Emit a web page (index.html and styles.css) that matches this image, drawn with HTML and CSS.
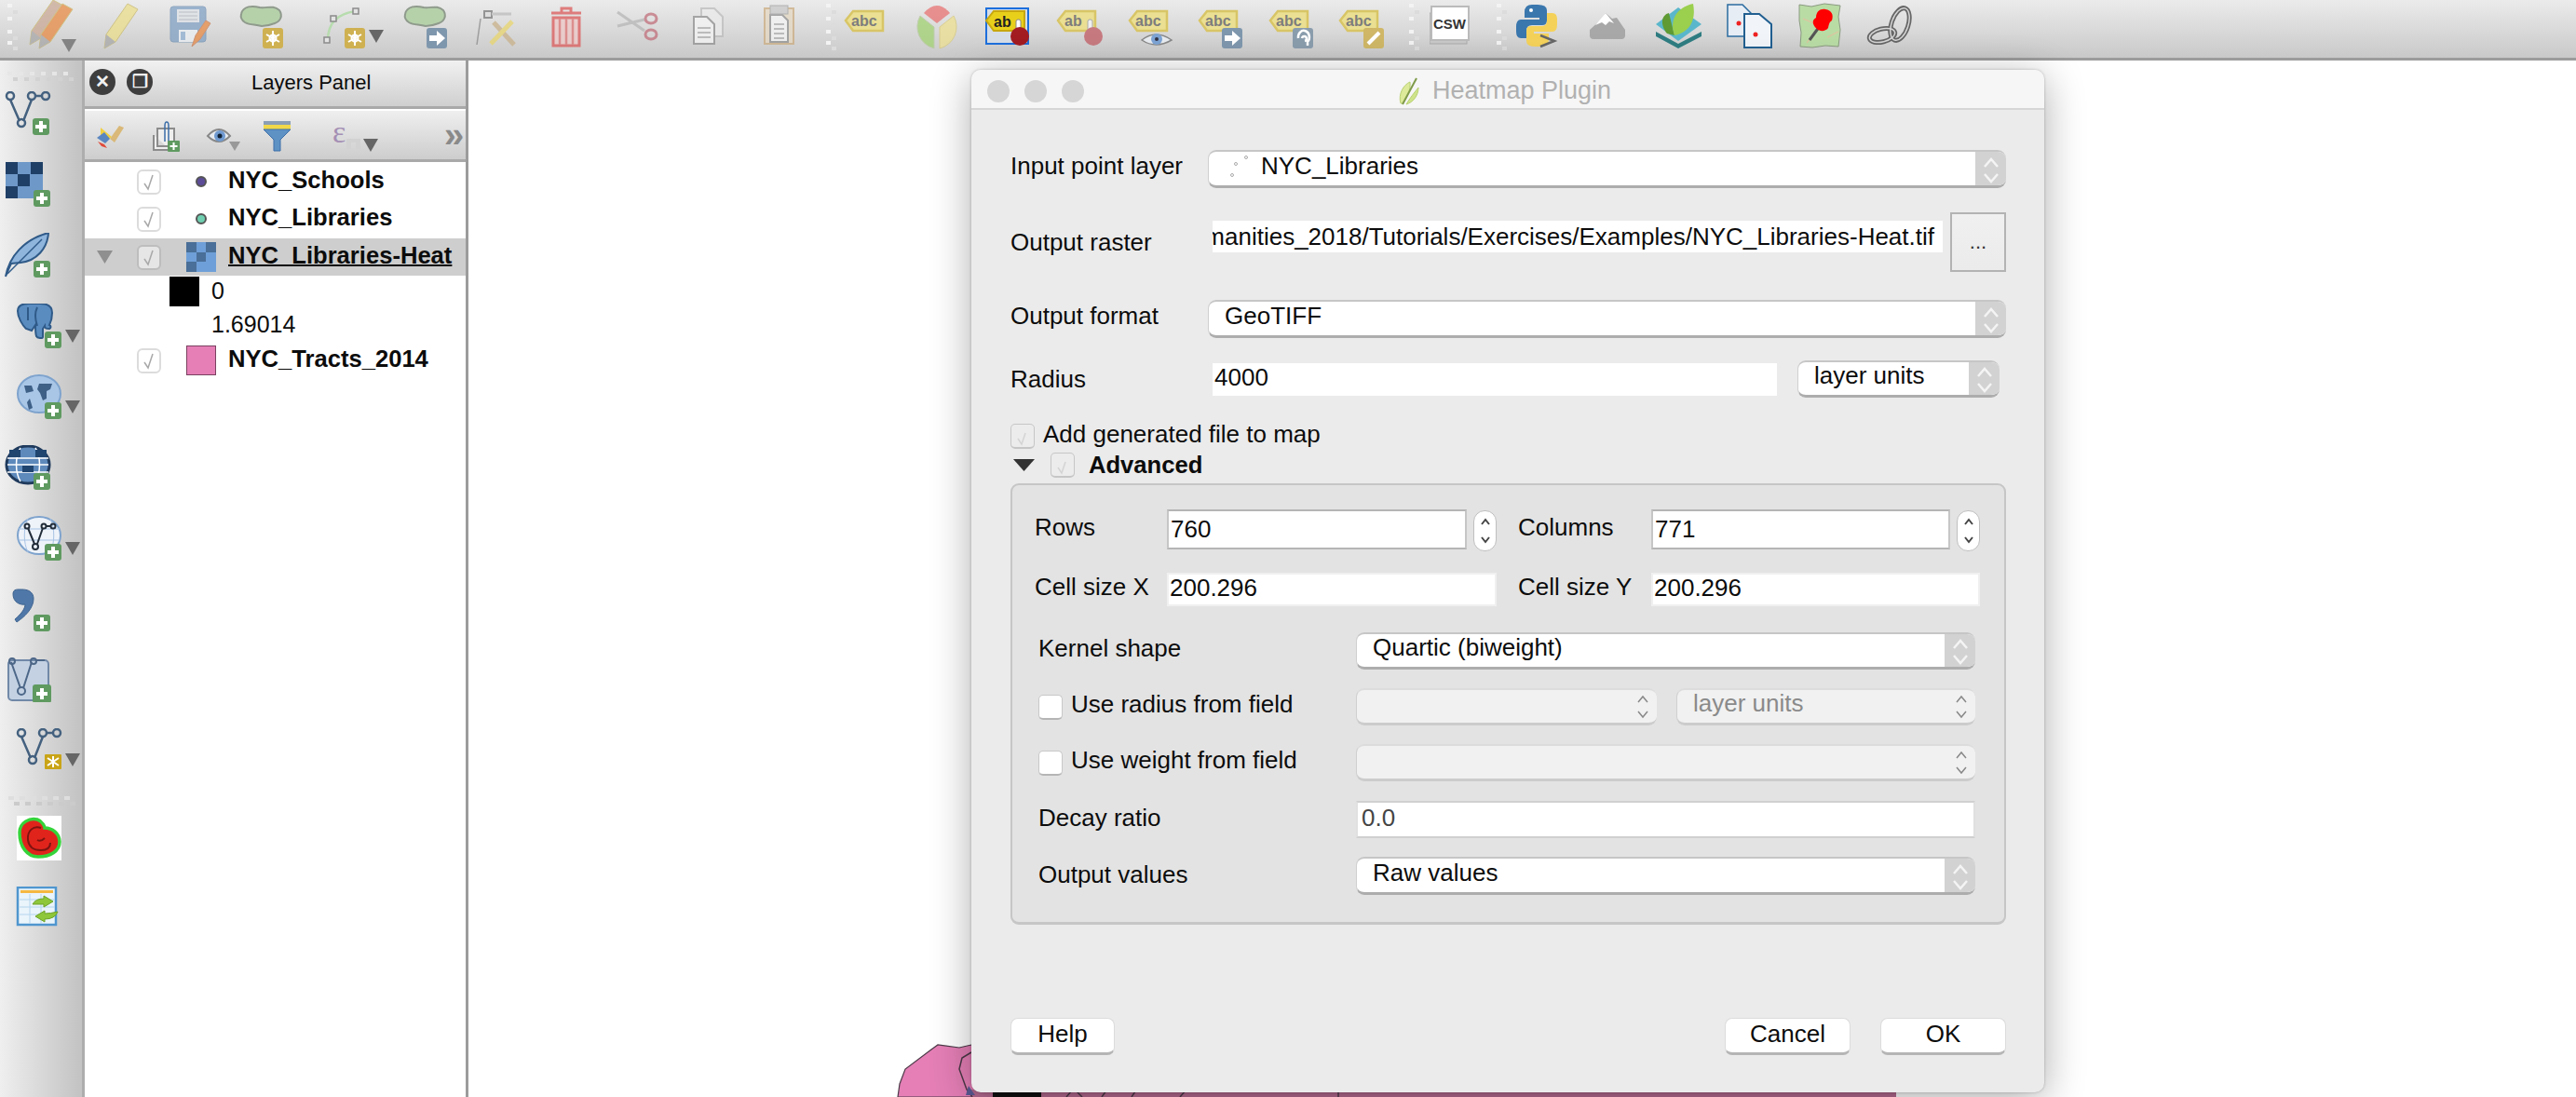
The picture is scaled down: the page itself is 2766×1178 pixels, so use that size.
FILE: index.html
```html
<!DOCTYPE html>
<html lang="en">
<head>
<meta charset="utf-8">
<title>QGIS Heatmap Plugin</title>
<link rel="stylesheet" href="styles.css">
</head>
<body>
<svg class="defs" aria-hidden="true">
  <defs>
    <g id="plus"><rect width="18" height="18" rx="3" fill="#5f9a60"/><path d="M9 3v12M3 9h12" stroke="#fff" stroke-width="4"/></g>
    <g id="snow"><rect width="22" height="22" rx="3" fill="#cfb152"/><g stroke="#fff" stroke-width="2" fill="none"><path d="M11 3v16M4 7l14 8M18 7L4 15"/><circle cx="11" cy="11" r="3.500"/></g></g>
    <g id="snowS"><rect width="18" height="16" rx="1" fill="#c9a417"/><path d="M9 2v12M3 4l12 8M15 4L3 12" stroke="#fff" stroke-width="2"/></g>
    <polygon id="tri" points="0,0 16,0 8,14" fill="#666"/>
    <g id="gripV" fill="#dcdcdc"><rect x="0" y="0" width="5" height="4" fill="#f3f3f3"/><rect x="6" y="7" width="5" height="4"/><rect x="0" y="14" width="5" height="4" fill="#f3f3f3"/><rect x="6" y="21" width="5" height="4"/><rect x="0" y="28" width="5" height="4" fill="#f3f3f3"/><rect x="6" y="35" width="5" height="4"/><rect x="0" y="40" width="5" height="4" fill="#f3f3f3"/><rect x="6" y="46" width="5" height="4"/></g>
    <path id="tagShape" d="M1 11 9 1h32v21H9z" fill="#eadf92" stroke="#d8c566" stroke-width="2.500"/>
    <path id="blob" d="M259 15c2-9 12-9 20-7 8 1 14-3 21 3 4 6 1 12-5 14-5 2-10 3-14 3-8-2-13-1-18-4-3-2-5-5-4-9z" fill="#b5d1aa" stroke="#8f9a8c" stroke-width="2"/>
    <g id="arrowBadge"><rect width="22" height="22" rx="3" fill="#7f97ad"/><path d="M3 8h8V3l9 8-9 8v-5H3z" fill="#fff"/></g>
    <g id="pencil"><path d="M0 48 2 33 25 0l11 6L12 41z" fill="currentColor" stroke="#c9b866" stroke-width="1"/><path d="M0 48 2 33l10 8z" fill="#a7a7a7"/></g>
    <g id="vee" fill="none" stroke="#44617f" stroke-width="2.500"><path d="M11 9 21 32M25 32 34 9M37 5h8"/><circle cx="11" cy="5" r="4"/><circle cx="34" cy="5" r="4"/><circle cx="49" cy="5" r="4"/><circle cx="23" cy="34" r="4"/></g>
    <path id="chev" d="M2 11 9 3l7 8M2 19l7 8 7-8" fill="none" stroke="#f4f4f4" stroke-width="2.500"/>
    <path id="chevOff" d="M2 10l5-6 5 6M2 20l5 6 5-6" fill="none" stroke="#888" stroke-width="1.500"/>
    <path id="chevSpin" d="M2 9l4-5 4 5M2 23l4 5 4-5" fill="none" stroke="#444" stroke-width="2"/>
    <path id="tick" d="M8 15l4 6 5-15" fill="none" stroke="#a8a8a8" stroke-width="1.500"/>
    <path id="tickFaint" d="M8 16l4 6 4-12" fill="none" stroke="#d4d4d4" stroke-width="1.500"/>
  </defs>
</svg>

<header class="topbar">
  <svg class="tool" width="22" height="62" viewBox="0 0 22 62"><use href="#gripV" x="8" y="4"/></svg>
  <svg class="tool dim" width="68" height="62" viewBox="22 0 68 62"><g color="#c9a793"><use href="#pencil" x="32" y="0"/></g><g color="#e8883f"><use href="#pencil" x="42" y="4"/></g><use href="#tri" x="66" y="42" fill="#777"/></svg>
  <svg class="tool dim" width="76" height="62" viewBox="90 0 76 62"><g color="#ecdf88"><use href="#pencil" x="112" y="4"/></g></svg>
  <svg class="tool dim" width="76" height="62" viewBox="166 0 76 62"><rect x="183" y="7" width="38" height="38" rx="3" fill="#7fa0c4" stroke="#6f8fb3"/><rect x="190" y="10" width="24" height="14" fill="#dfe3e8"/><path d="M192 13h20M192 17h20M192 21h20" stroke="#aab2bc"/><rect x="192" y="32" width="20" height="13" fill="#eef2f6"/><rect x="194" y="34" width="5" height="9" fill="#8fb0d4"/><path d="M206 50 210 38 221 22l5 3-11 17z" fill="#e8883f" stroke="#c97a50"/></svg>
  <svg class="tool" width="76" height="62" viewBox="242 0 76 62"><use href="#blob"/><use href="#snow" x="282" y="30"/></svg>
  <svg class="tool" width="101" height="62" viewBox="318 0 101 62"><path d="M352 43Q352 16 382 12" fill="none" stroke="#b7dcae" stroke-width="2.500"/><g fill="#e4e4e4" stroke="#8b8b8b" stroke-width="1.500"><rect x="348" y="40" width="6" height="6"/><rect x="355" y="17" width="6" height="6"/><rect x="379" y="9" width="6" height="6"/></g><use href="#snow" x="370" y="30"/><use href="#tri" x="396" y="32" fill="#4a4a4a"/></svg>
  <svg class="tool" width="76" height="62" viewBox="419 0 76 62"><use href="#blob" x="176"/><use href="#arrowBadge" x="458" y="30"/></svg>
  <svg class="tool dim" width="76" height="62" viewBox="495 0 76 62"><path d="M516 20 512 48" stroke="#888" stroke-width="1.500"/><rect x="520" y="12" width="8" height="7" fill="#ddd" stroke="#777" stroke-width="2"/><path d="M528 15h21" stroke="#bbb" stroke-width="3"/><path d="M530 24l22 24" stroke="#c9b088" stroke-width="5"/><path d="M527 47l23-24" stroke="#ead66a" stroke-width="5"/></svg>
  <svg class="tool dim" width="76" height="62" viewBox="571 0 76 62"><path d="M592 14h32M603 13v-4h10v4" fill="none" stroke="#dd5555" stroke-width="3"/><rect x="594" y="19" width="28" height="30" fill="#f0c8c8" stroke="#dd5555" stroke-width="3"/><path d="M601 20v28M608 20v28M615 20v28" stroke="#dd7070" stroke-width="2.500"/></svg>
  <svg class="tool dim" width="76" height="62" viewBox="647 0 76 62"><path d="M663 13 692 33M663 28 692 21" stroke="#b5b5b5" stroke-width="3"/><ellipse cx="699" cy="20" rx="6" ry="5" fill="none" stroke="#c06c78" stroke-width="3"/><ellipse cx="699" cy="37" rx="6" ry="5" fill="none" stroke="#c06c78" stroke-width="3"/></svg>
  <svg class="tool dim" width="76" height="62" viewBox="723 0 76 62"><path d="M753 9h14l9 9v21h-23z" fill="#ececec" stroke="#bcbcbc" stroke-width="2"/><path d="M745 18h14l8 8v21h-22z" fill="#f6f6f6" stroke="#8e8e8e" stroke-width="2"/><path d="M749 30h14M749 35h14M749 40h14" stroke="#999" stroke-width="1.500"/></svg>
  <svg class="tool dim" width="76" height="62" viewBox="799 0 76 62"><rect x="821" y="9" width="31" height="38" fill="#e6d8c2" stroke="#cbab7d" stroke-width="2"/><path d="M827 16h13l6 6v23h-19z" fill="#f6f6f6" stroke="#8e8e8e" stroke-width="2"/><rect x="827" y="6" width="19" height="9" fill="#c8c8c8" stroke="#9d9d9d"/><path d="M831 26h11M831 31h11M831 36h11M831 41h11" stroke="#999" stroke-width="1.500"/></svg>
  <svg class="tool" width="30" height="62" viewBox="875 0 30 62"><use href="#gripV" x="887" y="4"/></svg>
  <svg class="tool" width="62" height="62" viewBox="905 0 62 62"><use href="#tagShape" x="907" y="11"/><text class="tagtext" x="914" y="28">abc</text></svg>
  <svg class="tool dim" width="76" height="62" viewBox="967 0 76 62"><path d="M1006 25 992 14Q1006-2 1020 14z" fill="#e96f6f"/><path d="M1003 29v23A24 24 0 0 1 988 17z" fill="#a0d26e" stroke="#b7c8a0"/><path d="M1009 29v23A24 24 0 0 0 1024 17z" fill="#efe18f" stroke="#d7c978"/></svg>
  <svg class="tool" width="76" height="62" viewBox="1043 0 76 62"><rect x="1059" y="9" width="45" height="38" fill="#d6dde6" stroke="#1d6fdc" stroke-width="2"/><path d="M1059 22 1067 12h33v21h-33z" fill="#e8d01a" stroke="#c8a810" stroke-width="2"/><text class="tagtext strong" x="1067" y="29">ab</text><rect x="1091" y="21" width="5" height="12" rx="2" fill="#fff" stroke="#888"/><circle cx="1095" cy="39" r="10" fill="#a21c22"/></svg>
  <svg class="tool" width="76" height="62" viewBox="1119 0 76 62"><use href="#tagShape" x="1135" y="11"/><text class="tagtext" x="1143" y="28">ab</text><rect x="1168" y="21" width="5" height="12" rx="2" fill="#f0f0f0" stroke="#aaa"/><circle cx="1174" cy="39" r="10" fill="#c67a80"/></svg>
  <svg class="tool" width="76" height="62" viewBox="1195 0 76 62"><use href="#tagShape" x="1212" y="11"/><text class="tagtext" x="1219" y="28">abc</text><path d="M1226 43q15-12 32 0-17 10-32 0z" fill="#e8ecf0" stroke="#888" stroke-width="1.500"/><circle cx="1242" cy="42" r="6" fill="#7da4d4"/><circle cx="1242" cy="42" r="2" fill="#334"/></svg>
  <svg class="tool" width="76" height="62" viewBox="1271 0 76 62"><use href="#tagShape" x="1287" y="11"/><text class="tagtext" x="1294" y="28">abc</text><use href="#arrowBadge" x="1312" y="30"/></svg>
  <svg class="tool" width="76" height="62" viewBox="1347 0 76 62"><use href="#tagShape" x="1363" y="11"/><text class="tagtext" x="1370" y="28">abc</text><rect x="1388" y="30" width="22" height="22" rx="3" fill="#8a9dad"/><path d="M1394 41a6 7 0 1 1 10 4v4M1398 41a2.500 2.500 0 1 1 3 3" fill="none" stroke="#fff" stroke-width="2.500"/></svg>
  <svg class="tool" width="76" height="62" viewBox="1423 0 76 62"><use href="#tagShape" x="1438" y="11"/><text class="tagtext" x="1445" y="28">abc</text><rect x="1464" y="30" width="22" height="22" rx="3" fill="#cfb767"/><path d="M1469 47 1481 35" stroke="#fff" stroke-width="4"/></svg>
  <svg class="tool" width="36" height="62" viewBox="1499 0 36 62"><use href="#gripV" x="1513" y="4"/></svg>
  <svg class="tool" width="57" height="62" viewBox="1535 0 57 62"><rect x="1535" y="14" width="40" height="33" fill="#c9c9c9" stroke="#aaa"/><rect x="1537" y="7" width="40" height="36" fill="#fff" stroke="#bbb" stroke-width="2"/><text class="csw" x="1539" y="31">CSW</text></svg>
  <svg class="tool" width="33" height="62" viewBox="1592 0 33 62"><use href="#gripV" x="1607" y="4"/></svg>
  <svg class="tool" width="62" height="62" viewBox="1625 0 62 62"><path d="M1651 5h-6q-8 0-8 8v6h16v2h-20q-5 0-5 8v5q0 7 5 7h6v-8q0-6 6-6h11q5 0 5-5V11q0-6-10-6z" fill="#3a77ad"/><path d="M1651 5h-6q-8 0-8 8v6h16v2h-20q-5 0-5 8v5q0 7 5 7h6v-8q0-6 6-6h11q5 0 5-5V11q0-6-10-6z" transform="rotate(180 1650 27.500)" fill="#f4d25a"/><circle cx="1644" cy="11" r="2" fill="#fff"/><path d="M1654 38l15 6-15 6" fill="none" stroke="#666" stroke-width="2.500"/></svg>
  <svg class="tool" width="76" height="62" viewBox="1687 0 76 62"><path d="M1707 38V32l11-10 6-8 7 6 5-1 9 13v6q0 4-4 4h-30q-4 0-4-4z" fill="#a8a8a8"/><path d="M1713 27l11-13 9 11-5-2-4 4-4-3z" fill="#fff"/></svg>
  <svg class="tool" width="76" height="62" viewBox="1763 0 76 62"><path d="M1778 34v5l24 13 25-13v-5l-25 13z" fill="#2f7d82"/><path d="M1778 26l24-18 25 18-25 18z" fill="#5ab7cb"/><path d="M1790 36c-8-10-6-20 2-22l6 24z" fill="#5f9a33"/><path d="M1798 38c-6-16 2-30 20-34 3 16-2 30-20 34z" fill="#9bcf4e"/></svg>
  <svg class="tool" width="76" height="62" viewBox="1839 0 76 62"><path d="M1855 5h16l10 10v24h-26z" fill="#e6edf5" stroke="#2b6c9f" stroke-width="1.500"/><path d="M1873 15h16l13 11v25h-29z" fill="#f1f5fa" stroke="#215f90" stroke-width="2"/><circle cx="1867" cy="25" r="2.500" fill="#e22"/><circle cx="1885" cy="37" r="2.500" fill="#e22"/></svg>
  <svg class="tool" width="76" height="62" viewBox="1915 0 76 62"><path d="M1932 5l13 2 14-3 17 2-2 12 2 14-2 18-14-1-14 2-13-1 1-15-2-13z" fill="#b9dca5" stroke="#8a9a80"/><path d="M1936 20l14 6M1962 40l12-6M1940 46l8-10" stroke="#d6c9a0" stroke-width="1.500"/><path d="M1943 43 1954 28" stroke="#555" stroke-width="3"/><path d="M1951 31c-6-5-5-10-1-12 0-7 5-10 10-9 7 1 9 6 7 12-3 2-3 4-4 8-3 4-9 4-12 1z" fill="#f00"/></svg>
  <svg class="tool" width="76" height="62" viewBox="1991 0 76 62"><g fill="none" stroke="#666" stroke-width="5"><ellipse cx="2040" cy="26" rx="9" ry="18" transform="rotate(18 2040 26)"/><ellipse cx="2021" cy="38" rx="14" ry="7" transform="rotate(-14 2021 38)"/></g><g fill="none" stroke="#d6d6d6" stroke-width="1.500"><ellipse cx="2040" cy="26" rx="9" ry="18" transform="rotate(18 2040 26)"/><ellipse cx="2021" cy="38" rx="14" ry="7" transform="rotate(-14 2021 38)"/></g></svg>
</header>

<div class="main">
  <aside class="sidebar">
    <svg class="gripH" width="88" height="11" viewBox="0 0 88 11"><g fill="#e6e6e6"><path d="M8 0h5v4H8zM20 0h5v4h-5zM32 0h5v4h-5zM44 0h5v4h-5zM56 0h5v4h-5zM68 0h5v4h-5z"/><path d="M14 6h5v4h-5zM26 6h5v4h-5zM38 6h5v4h-5zM50 6h5v4h-5zM62 6h5v4h-5zM74 6h5v4h-5z" fill="#d2d2d2"/></g></svg>
    <svg width="88" height="48" viewBox="0 0 88 48"><use href="#vee"/><use href="#plus" x="35" y="29"/></svg>
    <svg width="88" height="48" viewBox="0 0 88 48"><rect x="6" y="0" width="40" height="39" fill="#6e98c8"/><path d="M6 0h13v13H6zM33 0h13v13H33zM19 13h13v13H19zM6 26h13v13H6z" fill="#1f3f66"/><use href="#plus" x="36" y="30"/></svg>
    <svg width="88" height="48" viewBox="0 0 88 48"><path d="M6 47c4-22 20-40 46-47-1 16-12 30-30 32l-10 1C10 37 8 42 6 47z" fill="#8fb5dc" stroke="#2f5a88" stroke-width="2"/><path d="M8 44 45 7" stroke="#2f5a88" stroke-width="1.500"/><use href="#plus" x="36" y="30"/></svg>
    <svg width="88" height="48" viewBox="0 0 88 48"><path d="M19 8c0-6 6-8 12-8h12c8 0 13 3 13 10 0 5-1 9-3 13 2 1 2 3 0 4-3 0-5 0-5-3l-2 3v9c0 2-6 1-7-1-1-3-1-8-1-12l-4 6-6-2c-4-4-9-12-9-19z" fill="#5a8cc0" stroke="#2f5a88" stroke-width="2"/><path d="M30 4v14M40 4c-3 6-2 14 0 20" stroke="#2f5a88" stroke-width="2" fill="none"/><use href="#plus" x="48" y="30"/><use href="#tri" x="70" y="28"/></svg>
    <svg width="88" height="48" viewBox="0 0 88 48"><ellipse cx="42" cy="21" rx="23" ry="20" fill="#a9c6e6" stroke="#7ea3cd" stroke-width="2"/><path d="M26 12h8l2 6-8 2zM42 10h14l-2 6-4 2v8l-4 2-3-8-3-4zM32 26l3 10-4 2-2-8z" fill="#3e5f86"/><use href="#plus" x="48" y="30"/><use href="#tri" x="70" y="28"/></svg>
    <svg width="88" height="48" viewBox="0 0 88 48"><ellipse cx="30" cy="21" rx="23" ry="20" fill="#5d89bb" stroke="#1f3a5c" stroke-width="3"/><path d="M8 14h44M8 21h44M8 29h44M22 3c-6 10-6 26 0 36M38 3c6 10 6 26 0 36" stroke="#fff" stroke-width="1.500" fill="none"/><path d="M10 5h12v8H10zM38 5h12v8H38zM24 22h12v7H24z" fill="#20456f"/><use href="#plus" x="36" y="30"/></svg>
    <svg width="88" height="48" viewBox="0 0 88 48"><ellipse cx="42" cy="21" rx="23" ry="20" fill="#eef3fa" stroke="#7ea3cd" stroke-width="2"/><path d="M20 14h44M20 26h44M30 3c-5 10-5 26 0 36M54 3c5 10 5 26 0 36" stroke="#a7c3e4" fill="none"/><g fill="none" stroke="#222d3a" stroke-width="2"><path d="M30 13 37 30M40 30 46 13M49 11h6"/><circle cx="29" cy="11" r="2.500"/><circle cx="47" cy="11" r="2.500"/><circle cx="57" cy="11" r="2.500"/><circle cx="38" cy="33" r="3"/></g><use href="#plus" x="48" y="30"/><use href="#tri" x="70" y="28"/></svg>
    <svg width="88" height="48" viewBox="0 0 88 48"><path d="M14 8c0-6 5-5 10-5 8 0 12 4 12 10 0 10-9 19-18 25l-2-3c6-5 11-11 11-16-5 1-13-2-13-11z" fill="#4f78a8" stroke="#3e638f"/><use href="#plus" x="36" y="30"/></svg>
    <svg width="88" height="48" viewBox="0 0 88 48"><rect x="9" y="3" width="43" height="43" rx="4" fill="#c3d1e3" stroke="#7189a8" stroke-width="2"/><g fill="none" stroke="#4d6788" stroke-width="2"><path d="M12 5l10 28M25 33 34 5M38 3h10"/><circle cx="23" cy="36" r="4"/><circle cx="36" cy="4" r="3"/><circle cx="13" cy="4" r="3"/></g><rect x="35" y="29" width="20" height="20" rx="3" fill="#5f9a60"/><path d="M45 33v12M39 39h12" stroke="#fff" stroke-width="4"/></svg>
    <svg width="88" height="48" viewBox="0 0 88 48"><use href="#vee" x="12"/><use href="#snowS" x="48" y="28"/><use href="#tri" x="70" y="27"/></svg>
    <svg class="gripH2" width="88" height="11" viewBox="0 0 88 11"><g fill="#dedede"><path d="M9 0h6v4H9zM21 0h6v4h-6zM33 0h6v4h-6zM45 0h6v4h-6zM57 0h6v4h-6zM69 0h6v4h-6z"/><path d="M15 6h6v4h-6zM27 6h6v4h-6zM39 6h6v4h-6zM51 6h6v4h-6zM63 6h6v4h-6zM75 6h6v4h-6z" fill="#cbcbcb"/></g></svg>
    <svg width="88" height="48" viewBox="0 0 88 48"><rect x="18" y="0" width="48" height="48" fill="#fff"/><path d="M21 18C21 7 32 2 40 4c6 2 8 8 8 9 8 0 16 6 16 15 0 10-10 16-23 16-12 0-20-11-20-26z" fill="#e0241c" stroke="#35d43a" stroke-width="3.500"/><path d="M44 13c-8-3-15 3-14 13 1 8 6 11 14 11 6 0 10-2 10-8" fill="none" stroke="#7d1410" stroke-width="2"/><path d="M40 26c3 2 6 0 8-2" fill="none" stroke="#7d1410" stroke-width="2"/></svg>
    <svg width="88" height="48" viewBox="0 0 88 48"><rect x="19" y="1" width="41" height="40" fill="#eaf4fb" stroke="#4f96cf" stroke-width="2.500"/><rect x="22" y="4" width="35" height="3" fill="#f5b840"/><path d="M21 14h38M21 22h38M21 30h38M32 8v32M44 8v32" stroke="#b4d6ee"/><path d="M35 19q3-6 12-6v-3l10 6-10 6v-3q-6 0-12 0z" fill="#8ec73a" stroke="#6ea326"/><path d="M62 27q-3 8-14 8v3l-10-6 10-6v3q6 0 14-2z" fill="#8ec73a" stroke="#6ea326"/></svg>
  </aside>

  <section class="panel">
    <div class="panel-title">
      <span class="round-btn">✕</span>
      <span class="round-btn">❐</span>
      <span class="panel-name">Layers Panel</span>
    </div>
    <div class="panel-tools">
      <svg width="58" height="53" viewBox="91 117 58 53"><path d="M128 133l5 2-10 16-5-4z" fill="#d9b878"/><path d="M108 135l12 10-6 4-6-6z" fill="#f0d040"/><path d="M104 146l8-6 6 7-5 5z" fill="#5a86c0"/><path d="M105 150l7 3 3 4-6-2z" fill="#e04a3a"/></svg>
      <svg width="59" height="53" viewBox="149 117 59 53"><path d="M169 136h18v19h-18zM165 143v16h18" fill="#eee" stroke="#8c8c8c" stroke-width="2"/><path d="M177 150v-17q0-4 2-4t2 4v17" fill="none" stroke="#3c6ea8" stroke-width="1.500"/><rect x="180" y="149" width="13" height="12" rx="1" fill="#5f9a60"/><path d="M186.500 151v8M182.500 155h8" stroke="#fff" stroke-width="2"/></svg>
      <svg width="62" height="53" viewBox="208 117 62 53"><path d="M223 144q12-14 24 0-12 12-24 0z" fill="#e8ecf0" stroke="#888" stroke-width="2"/><circle cx="236" cy="144" r="6" fill="#6f9ad0"/><circle cx="236" cy="144" r="2.500" fill="#123"/><path d="M246 150h12l-6 10z" fill="#999"/></svg>
      <svg width="65" height="53" viewBox="270 117 65 53"><path d="M283 128h29v4h-29z" fill="#8a9fb5"/><path d="M283 132h29v5h-29z" fill="#f1d84a"/><path d="M283 137h29l-11 11v12h-7v-12z" fill="#5f92c4" stroke="#3c6ea8"/></svg>
      <svg width="105" height="53" viewBox="335 117 105 53"><text class="eps" x="357" y="151">ε</text><path d="M372 147h15v11h-5v-7h-5v7h-5z" fill="#d2d2d2"/><use href="#tri" x="390" y="147" fill="#666"/></svg>
      <span class="more">»</span>
    </div>
    <div class="tree">
      <div class="tree-row">
        <span class="twist"></span><span class="check"><svg width="26" height="27" viewBox="0 0 26 27"><use href="#tick"/></svg></span>
        <span class="sym"><span class="dot dot-school"></span></span><span class="layer">NYC_Schools</span>
      </div>
      <div class="tree-row">
        <span class="twist"></span><span class="check"><svg width="26" height="27" viewBox="0 0 26 27"><use href="#tick"/></svg></span>
        <span class="sym"><span class="dot dot-lib"></span></span><span class="layer">NYC_Libraries</span>
      </div>
      <div class="tree-row selected">
        <span class="twist"><svg width="17" height="14" viewBox="0 0 17 14"><path d="M0 0h17L8.500 14z" fill="#8f8f8f"/></svg></span><span class="check"><svg width="26" height="27" viewBox="0 0 26 27"><use href="#tick"/></svg></span>
        <span class="sym"><svg width="32" height="32" viewBox="0 0 32 32"><rect width="32" height="32" fill="#6f9fd8"/><path d="M0 0h11v11H0zM21 0h11v11H21zM11 11h10v10H11zM0 21h11v11H0z" fill="#4a6f98"/></svg></span><span class="layer current">NYC_Libraries-Heat</span>
      </div>
      <div class="legend-row"><span class="swatch swatch-black"></span><span class="legend-text">0</span></div>
      <div class="legend-row legend-last"><span class="swatch"></span><span class="legend-text">1.69014</span></div>
      <div class="tree-row">
        <span class="twist"></span><span class="check"><svg width="26" height="27" viewBox="0 0 26 27"><use href="#tick"/></svg></span>
        <span class="sym"><span class="pink"></span></span><span class="layer">NYC_Tracts_2014</span>
      </div>
    </div>
  </section>

  <main class="canvas">
    <svg width="2263" height="1113" viewBox="503 65 2263 1113">
      <path d="M964 1178l2-14 6-16 28-21 7-5 23 3 13-3h1000l-10 56z" fill="#e57fb6" stroke="#4d3a48" stroke-width="1.200"/>
      <rect x="1043" y="1170" width="993" height="8" fill="#b4698f"/>
      <path d="M1043 1130l-10 6-3 12 8 22 6 8M1075 1178l8-6M1145 1178l6-7M1162 1178l-6-6M1183 1178l5-7M1215 1178l4-6M1267 1178l6-7M1437 1178v-6" fill="none" stroke="#4d3a48" stroke-width="1.500"/>
      <path d="M1040 1166l-3 10h10z" fill="#5b5a94"/>
      <rect x="1066" y="1172" width="52" height="6" fill="#111"/>
    </svg>
  </main>
</div>

<div class="dialog">
  <div class="dialog-title">
    <span class="lights"><i></i><i></i><i></i></span>
    <svg width="28" height="30" viewBox="0 0 28 30"><path d="M3 28C0 18 6 8 13 5c1 8-3 17-8 23z" fill="#dcea9a" stroke="#b8d070"/><path d="M5 29 20 1" stroke="#7f9a4a" stroke-width="2"/><path d="M9 29c7-2 13-9 13-18-4 5-9 11-13 18z" fill="#cfe48a" stroke="#b8d070"/></svg>
    <span>Heatmap Plugin</span>
  </div>
  <div class="dialog-body">
    <div class="row row-combo">
      <span class="label wide">Input point layer</span>
      <div class="combo fill"><span class="combo-text combo-icon"><svg width="24" height="24" viewBox="0 0 24 24"><g fill="#fff" stroke="#aaa"><circle cx="3" cy="22" r="1.500"/><circle cx="7" cy="10" r="1.500"/><circle cx="18" cy="3" r="1.500"/></g></svg>NYC_Libraries</span><span class="arrows"><svg width="18" height="30" viewBox="0 0 18 30"><use href="#chev"/></svg></span></div>
    </div>
    <div class="row row-raster">
      <span class="label wide flat">Output raster</span>
      <div class="path-input"><span>manities_2018/Tutorials/Exercises/Examples/NYC_Libraries-Heat.tif</span></div>
      <span class="browse">...</span>
    </div>
    <div class="row row-format">
      <span class="label wide">Output format</span>
      <div class="combo fill"><span class="combo-text">GeoTIFF</span><span class="arrows"><svg width="18" height="30" viewBox="0 0 18 30"><use href="#chev"/></svg></span></div>
    </div>
    <div class="row row-radius">
      <span class="label wide flat">Radius</span>
      <div class="radius-input">4000</div>
      <div class="combo unit"><span class="combo-text">layer units</span><span class="arrows"><svg width="18" height="30" viewBox="0 0 18 30"><use href="#chev"/></svg></span></div>
    </div>
    <label class="row row-add"><span class="box faint"><svg width="26" height="27" viewBox="0 0 26 27"><use href="#tickFaint"/></svg></span><span>Add generated file to map</span></label>
    <div class="row row-adv">
      <svg width="23" height="13" viewBox="0 0 23 13"><path d="M0 0h23L11.500 13z" fill="#333"/></svg>
      <span class="box faint"><svg width="26" height="27" viewBox="0 0 26 27"><use href="#tickFaint"/></svg></span>
      <strong>Advanced</strong>
    </div>
    <fieldset class="group">
      <div class="size-grid">
        <span class="label">Rows</span><div class="num">760</div><span class="spin"><svg width="12" height="32" viewBox="0 0 12 32"><use href="#chevSpin"/></svg></span>
        <span class="label col-right">Columns</span><div class="num">771</div><span class="spin"><svg width="12" height="32" viewBox="0 0 12 32"><use href="#chevSpin"/></svg></span>
        <span class="label">Cell size X</span><div class="cell">200.296</div>
        <span class="label col-right">Cell size Y</span><div class="cell">200.296</div>
      </div>
      <div class="form-grid">
        <span class="label">Kernel shape</span>
        <div class="combo"><span class="combo-text">Quartic (biweight)</span><span class="arrows"><svg width="18" height="30" viewBox="0 0 18 30"><use href="#chev"/></svg></span></div>
        <label class="chk"><span class="box"></span><span>Use radius from field</span></label>
        <div class="pair">
          <div class="combo off"><span class="combo-text"></span><span class="arrows-off"><svg width="14" height="30" viewBox="0 0 14 30"><use href="#chevOff"/></svg></span></div>
          <div class="combo off"><span class="combo-text">layer units</span><span class="arrows-off"><svg width="14" height="30" viewBox="0 0 14 30"><use href="#chevOff"/></svg></span></div>
        </div>
        <label class="chk"><span class="box"></span><span>Use weight from field</span></label>
        <div class="combo off"><span class="combo-text"></span><span class="arrows-off"><svg width="14" height="30" viewBox="0 0 14 30"><use href="#chevOff"/></svg></span></div>
        <span class="label near">Decay ratio</span>
        <div class="decay">0.0</div>
        <span class="label near">Output values</span>
        <div class="combo"><span class="combo-text">Raw values</span><span class="arrows"><svg width="18" height="30" viewBox="0 0 18 30"><use href="#chev"/></svg></span></div>
      </div>
    </fieldset>
    <div class="buttons">
      <button class="btn btn-help" type="button">Help</button>
      <span class="btn-spacer"></span>
      <button class="btn btn-main" type="button">Cancel</button>
      <button class="btn btn-main" type="button">OK</button>
    </div>
  </div>
</div>
</body>
</html>
```
FILE: styles.css
```css
* { box-sizing: border-box; }
html, body { margin: 0; padding: 0; height: 100%; }
body {
  width: 2766px;
  height: 1178px;
  overflow: hidden;
  display: flex;
  flex-direction: column;
  background: #fff;
  color: #0c0c0c;
  font-family: "Liberation Sans", Arial, sans-serif;
  font-size: 26px;
  position: relative;
}
svg { display: block; flex: none; }
.defs { position: absolute; width: 0; height: 0; }

/* top toolbar */
.topbar {
  flex: none;
  height: 65px;
  display: flex;
  background: linear-gradient(#ebebeb, #c9c9c9);
  border-bottom: 3px solid #9c9c9c;
}
.dim { opacity: .72; }
.tagtext { font: 700 16px "Liberation Sans", sans-serif; fill: #7d7d7d; }
.tagtext.strong { fill: #222; }
.csw { font: 700 15px "Liberation Sans", sans-serif; fill: #333; }
.eps { font: 34px "Liberation Serif", serif; fill: #a48fb4; }

/* main */
.main { flex: 1; display: flex; min-height: 0; }
.sidebar {
  width: 91px;
  flex: none;
  padding-top: 12px;
  display: flex;
  flex-direction: column;
  gap: 28px;
  background: linear-gradient(90deg, #efefef, #c4c4c4 96%);
  border-right: 3px solid #adadad;
}
.gripH { margin-bottom: -18px; }
.gripH2 { margin-top: -3px; margin-bottom: -18px; }

/* layers panel */
.panel {
  width: 412px;
  flex: none;
  display: flex;
  flex-direction: column;
  border-right: 3px solid #9c9c9c;
  background: #fff;
}
.panel-title {
  height: 52px;
  padding: 0 0 4px 5px;
  display: flex;
  align-items: center;
  gap: 12px;
  background: linear-gradient(#f1f1f1, #cfcfcf);
  border-bottom: 3px solid #a9a9a9;
  position: relative;
}
.round-btn {
  width: 28px;
  height: 28px;
  border-radius: 50%;
  background: #3e3e3e;
  color: #f0f0f0;
  font-size: 19px;
  font-weight: 700;
  display: flex;
  align-items: center;
  justify-content: center;
}
.panel-name {
  position: absolute;
  left: 179px;
  top: 11px;
  font-size: 22px;
}
.panel-tools {
  height: 55px;
  display: flex;
  align-items: center;
  margin-top: 2px;
  background: linear-gradient(#efefef, #cdcdcd);
  border-bottom: 3px solid #a9a9a9;
}
.more {
  margin-left: 37px;
  font-size: 38px;
  line-height: 40px;
  color: #8a8a8a;
  font-weight: 700;
}
.tree { padding-top: 1px; display: flex; flex-direction: column; }
.tree-row {
  height: 40px;
  display: flex;
  align-items: center;
  padding-left: 13px;
}
.tree-row.selected { background: #cecece; margin-top: 1px; }
.twist { width: 43px; flex: none; }
.check {
  width: 26px;
  height: 27px;
  flex: none;
  background: #fff;
  border: 2px solid #dcdcdc;
  border-radius: 6px;
}
.check svg { margin: -2px; }
.selected .check { background: #e6e6e6; border-color: #bdbdbd; }
.sym {
  width: 32px;
  flex: none;
  margin: 0 13px 0 27px;
  display: flex;
  justify-content: center;
  align-items: center;
}
.dot { width: 12px; height: 12px; border-radius: 50%; border: 2px solid #555; }
.dot-school { background: #5c4c98; }
.dot-lib { background: #6fcfb0; }
.layer { font-weight: 700; font-size: 25.600px; white-space: nowrap; padding-bottom: 3px; }
.layer.current { text-decoration: underline; text-decoration-thickness: 2px; }
.pink { width: 32px; height: 32px; background: #e57fb6; border: 1px solid #7a4060; }
.legend-row {
  height: 36px;
  display: flex;
  align-items: center;
  gap: 13px;
  padding-left: 91px;
  font-size: 25px;
  white-space: nowrap;
}
.legend-last { height: 35px; }
.legend-text { padding-bottom: 3px; }
.swatch { width: 32px; height: 32px; margin-top: -2px; }
.swatch-black { background: #000; }

/* map */
.canvas { flex: 1; min-width: 0; position: relative; overflow: hidden; background: #fff; }

/* dialog window */
.dialog {
  position: absolute;
  left: 1043px;
  top: 75px;
  width: 1152px;
  height: 1098px;
  display: flex;
  flex-direction: column;
  background: #ebebeb;
  border-radius: 10px;
  box-shadow: 0 8px 44px rgba(0, 0, 0, .32), 0 0 3px rgba(0, 0, 0, .25);
}
.dialog-title {
  height: 43px;
  flex: none;
  display: flex;
  align-items: center;
  gap: 9px;
  padding: 4px 0 0 458px;
  position: relative;
  background: #f6f6f6;
  border-bottom: 2px solid #d6d6d6;
  border-radius: 10px 10px 0 0;
  color: #b1b1b1;
  font-size: 27px;
  white-space: nowrap;
}
.lights {
  position: absolute;
  left: 17px;
  top: 11px;
  display: flex;
  gap: 16px;
}
.lights i {
  width: 24px;
  height: 24px;
  border-radius: 50%;
  background: #d6d6d6;
}
.dialog-body {
  flex: 1;
  display: flex;
  flex-direction: column;
  padding: 43px 41px 40px 42px;
  min-height: 0;
}
.row { display: flex; align-items: center; white-space: nowrap; }
.label { padding-bottom: 6px; white-space: nowrap; }
.label.flat { padding-bottom: 0; }
.label.near { padding-bottom: 3px; }
.label.wide { width: 212px; flex: none; }
.row-raster { margin-top: 26px; height: 64px; }
.row-format { margin-top: 30px; }
.row-radius { margin-top: 24px; height: 40px; }
.row-add { margin-top: 27px; height: 28px; gap: 9px; }
.row-add > span:last-child { padding-bottom: 4px; }
.row-adv { margin-top: 4px; height: 27px; padding-left: 3px; }
.row-adv .box { margin-left: 17px; }
.row-adv strong { margin-left: 15px; font-size: 25.600px; }

.combo {
  height: 41px;
  display: flex;
  background: #fff;
  border-top: 2px solid #c6c6c6;
  border-bottom: 3px solid #adadad;
  border-left: 1px solid #d0d0d0;
  border-radius: 9px;
  overflow: hidden;
  min-width: 0;
}
.combo.fill { flex: 1; }
.combo-text {
  flex: 1;
  min-width: 0;
  padding: 0 0 6px 17px;
  display: flex;
  align-items: center;
  white-space: nowrap;
}
.combo-icon { padding-left: 22px; gap: 10px; }
.arrows {
  width: 33px;
  flex: none;
  display: flex;
  align-items: center;
  justify-content: center;
  background: #d2d2d2;
  margin-bottom: -3px;
}
.arrows-off {
  width: 30px;
  flex: none;
  display: flex;
  align-items: center;
  justify-content: center;
}
.combo.off {
  background: #f1f1f1;
  border-top-color: #dcdcdc;
  border-bottom-color: #cccccc;
  color: #8a8a8a;
}
.path-input {
  width: 784px;
  height: 34px;
  margin: 0 8px 12px 5px;
  flex: none;
  display: flex;
  justify-content: flex-end;
  align-items: center;
  overflow: hidden;
  padding-right: 9px;
  background: #fff;
  white-space: nowrap;
}
.browse {
  width: 60px;
  height: 64px;
  flex: none;
  display: flex;
  align-items: center;
  justify-content: center;
  border: 2px solid #b3b3b3;
  background: linear-gradient(#f0f0f0, #ebebeb);
  font-size: 22px;
  color: #333;
}
.radius-input {
  width: 606px;
  height: 35px;
  margin-left: 5px;
  flex: none;
  padding-left: 2px;
  background: #fff;
  line-height: 31px;
}
.unit { width: 217px; height: 40px; margin-left: 22px; flex: none; }
.box {
  width: 26px;
  height: 27px;
  flex: none;
  background: #fff;
  border: 1px solid #c8c8c8;
  border-bottom: 2px solid #b5b5b5;
  border-radius: 5px;
}
.box.faint { background: #ececec; border-color: #c6c6c6; }
.box svg { margin: -1px; }

.group {
  margin: 6px 0 0;
  padding: 26px 24px 0;
  width: 1069px;
  height: 474px;
  min-width: 0;
  display: block;
  background: #e3e3e3;
  border: 2px solid #c6c6c6;
  border-bottom-width: 3px;
  border-radius: 9px;
}
.size-grid {
  display: grid;
  grid-template-columns: 142px 322px 7px 25px 23px 143px 321px 7px 25px;
  grid-template-rows: 45px 36px;
  row-gap: 23px;
  align-items: center;
}
.num {
  height: 43px;
  align-self: start;
  padding-left: 2px;
  background: #fff;
  border: 2px solid #b5b5b5;
  border-left-color: #c6c6c6;
  border-right-color: #c6c6c6;
  line-height: 38px;
}
.spin {
  height: 44px;
  width: 25px;
  display: flex;
  align-items: center;
  justify-content: center;
  background: #fff;
  border: 1px solid #bfbfbf;
  border-radius: 12px;
}
.cell {
  height: 36px;
  padding-left: 1px;
  background: #fff;
  border: 2px solid #f0f0f0;
  line-height: 28px;
}
.size-grid > .label:nth-child(1) { grid-column: 1; }
.size-grid > .num:nth-child(2) { grid-column: 2; }
.size-grid > .spin:nth-child(3) { grid-column: 4; }
.size-grid > .label:nth-child(4) { grid-column: 6; }
.size-grid > .num:nth-child(5) { grid-column: 7; }
.size-grid > .spin:nth-child(6) { grid-column: 9; }
.size-grid > .label:nth-child(7) { grid-column: 1; }
.size-grid > .cell:nth-child(8) { grid-column: 2 / span 3; }
.size-grid > .label:nth-child(9) { grid-column: 6; }
.size-grid > .cell:nth-child(10) { grid-column: 7 / span 3; }
.form-grid {
  margin: 28px 0 0 4px;
  display: grid;
  grid-template-columns: 341px 665px;
  grid-template-rows: 40px 40px 40px 41px 41px;
  row-gap: 20px;
  align-items: center;
}
.form-grid .combo { height: 100%; }
.pair { display: flex; gap: 21px; height: 100%; }
.pair .combo:first-child { width: 323px; }
.pair .combo:last-child { width: 321px; }
.chk { display: flex; align-items: center; gap: 9px; white-space: nowrap; }
.chk > span:last-child { padding-bottom: 6px; }
.decay {
  height: 40px;
  padding-left: 4px;
  background: #fff;
  border: 2px solid #d0d0d0;
  border-left-color: #e0e0e0;
  border-right-color: #e0e0e0;
  line-height: 32px;
  color: #444;
}
.buttons {
  margin-top: auto;
  display: flex;
  gap: 32px;
}
.btn {
  height: 40px;
  padding: 0 0 4px;
  background: #fff;
  border: 1px solid #dcdcdc;
  border-bottom: 3px solid #b5b5b5;
  border-radius: 8px;
  font: 26px "Liberation Sans", Arial, sans-serif;
  color: #0c0c0c;
}
.btn-help { width: 112px; }
.btn-main { width: 135px; }
.btn-spacer { flex: 1; }
```
